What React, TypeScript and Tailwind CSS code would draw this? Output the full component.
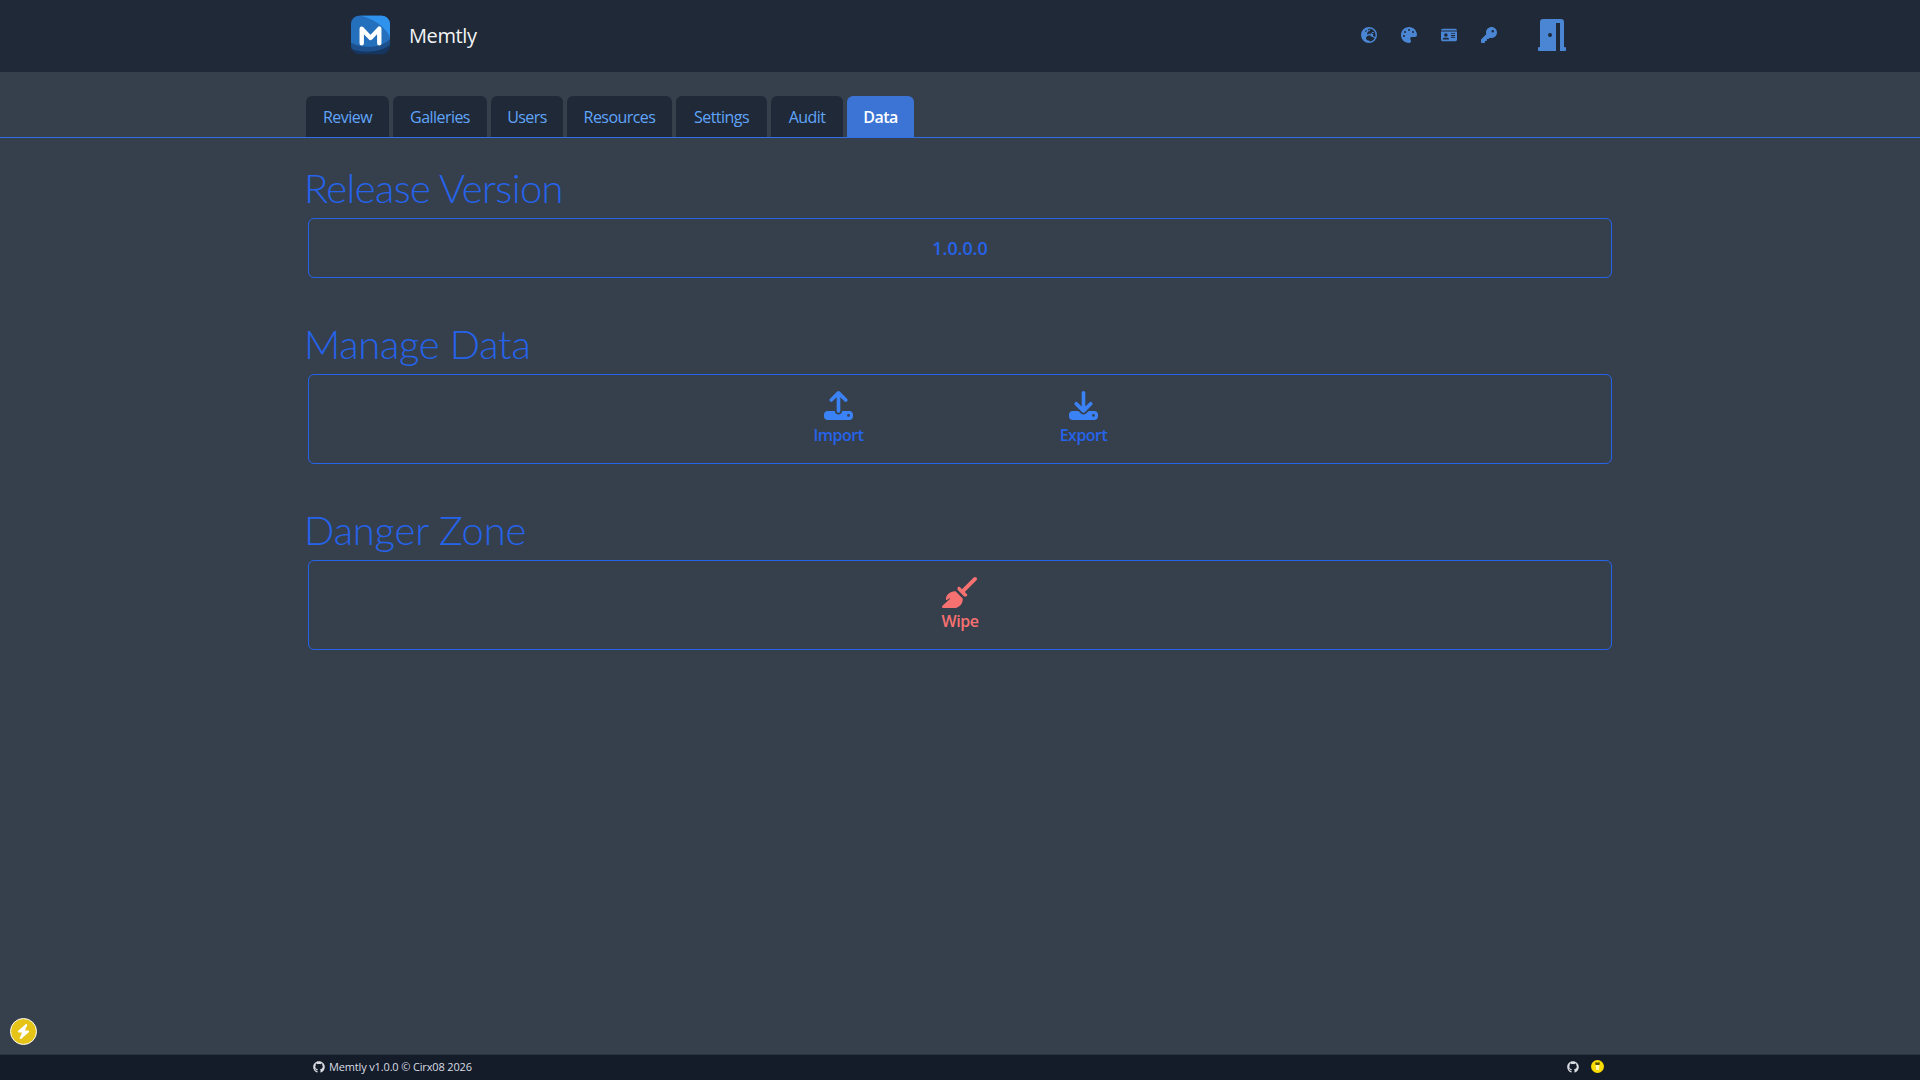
import { FaDownload, FaGithub, FaUpload, FaBroom, FaIdCard, FaKey, FaPalette, FaEarthEurope, FaBolt } from "react-icons/fa6";

const tabs = [
  { label: "Review", w: "w-[83px]" },
  { label: "Galleries", w: "w-[94px]" },
  { label: "Users", w: "w-[72px]" },
  { label: "Resources", w: "w-[105px]" },
  { label: "Settings", w: "w-[91px]" },
  { label: "Audit", w: "w-[72px]" },
];

const Logo = () => (
  <svg viewBox="0 0 40 40" className="w-[39px] h-10 shrink-0">
    <defs>
      <clipPath id="logoClip">
        <rect x="0" y="0" width="40" height="40" rx="9" />
      </clipPath>
    </defs>
    <g clipPath="url(#logoClip)">
      <rect width="40" height="40" fill="#16365f" />
      <path d="M0 34C12 39 30 38 40 30V0H0z" fill="#1e4f8d" />
      <path d="M0 28C12 34 30 34 40 24V0H0z" fill="#2470bd" />
      <path d="M9 0C22 3 34 10 40 22V0z" fill="#2f93ee" />
    </g>
    <path
      d="M11 28.500V13.500L20 23L29 13.500V28.500"
      fill="none"
      stroke="#ffffff"
      strokeWidth="4.500"
      strokeLinecap="round"
      strokeLinejoin="round"
    />
  </svg>
);

const Door = () => (
  <svg viewBox="0 0 28 32" className="w-7 h-8">
    <path
      fillRule="evenodd"
      d="M5 0h18a3 3 0 0 1 3 3v25h0.5a2 2 0 0 1 0 4H22V4h-4v28H1.500a2 2 0 0 1 0-4H2V3a3 3 0 0 1 3-3zM12 14a2 2 0 1 0 0 4a2 2 0 0 0 0-4z"
      fill="#4a86d4"
    />
  </svg>
);

const Coffee = () => (
  <svg viewBox="0 0 13 13" className="w-[13px] h-[13px]">
    <circle cx="6.500" cy="6.500" r="6.500" fill="#fbdc00" />
    <path d="M4 2.500h5l-0.600 2.500H4.600z" fill="#5b5200" />
    <path d="M4.600 5h3.800l-0.500 5h-2.800z" fill="#fff6b0" />
  </svg>
);

const Section = ({ title, spacing, children, className }: { title: string; spacing: string; children: React.ReactNode; className: string }) => (
  <div>
    <h2 className={`text-[40px] leading-[48px] font-light font-['Lato',sans-serif] text-[#2563eb] ml-[4px] mb-[6px] ${spacing}`}>{title}</h2>
    <div className={`ml-[8px] w-[1304px] rounded-[6px] border border-[#2563eb] ${className}`}>{children}</div>
  </div>
);

const App = () => {
  return (
    <div className="relative h-screen flex flex-col bg-[#36404c] font-['Open_Sans','Noto_Sans',sans-serif] overflow-hidden">
      <header className="h-[72px] shrink-0 bg-[#1f2937]">
        <div className="w-[1320px] mx-auto h-full flex items-center pl-[51px]">
          <div className="mb-[2px]">
            <Logo />
          </div>
          <span className="ml-[19px] text-[20px] text-[#f3f4f6] tracking-[-0.4px]">Memtly</span>
          <div className="ml-auto mr-[54px] mb-[2px] flex items-center text-[#4a86d4]">
            <div className="flex items-center gap-[24px] text-[16px] mr-[41px]">
              <FaEarthEurope />
              <FaPalette />
              <FaIdCard />
              <FaKey />
            </div>
            <Door />
          </div>
        </div>
      </header>

      <nav className="mt-[24px] h-[42px] shrink-0 border-b border-[#2f6fe8]">
        <div className="w-[1320px] mx-auto flex gap-[4px] pl-[6px]">
          {tabs.map((t) => (
            <div
              key={t.label}
              className={`${t.w} h-[41px] rounded-t-[6px] bg-[#1f2937] text-[#60a5fa] text-[16px] tracking-[-0.55px] flex items-center justify-center`}
            >
              {t.label}
            </div>
          ))}
          <div className="w-[67px] h-[41px] rounded-t-[6px] bg-[#3b74d4] text-white text-[16px] font-semibold tracking-[-0.55px] flex items-center justify-center">
            Data
          </div>
        </div>
      </nav>

      <main className="flex-1 w-[1320px] mx-auto flex flex-col pt-[26px]">
        <Section title="Release Version" spacing="tracking-[-0.65px]" className="h-[60px] flex items-center justify-center text-[#2563eb] text-[18px] font-semibold tracking-[-0.1px]">
          1.0.0.0
        </Section>
        <div className="h-[42px]" />
        <Section title="Manage Data" spacing="tracking-[-0.35px]" className="h-[90px] flex justify-center gap-[180px] pt-[16px] pl-[2px]">
          <div className="w-[65px] flex flex-col items-center text-[#2563eb]">
            <FaUpload className="text-[29px] text-[#3b82f6] mb-[3px]" />
            <span className="text-[16px] font-semibold tracking-[-0.5px] leading-[24px]">Import</span>
          </div>
          <div className="w-[65px] flex flex-col items-center text-[#2563eb]">
            <FaDownload className="text-[29px] text-[#3b82f6] mb-[3px]" />
            <span className="text-[16px] font-semibold tracking-[-0.5px] leading-[24px]">Export</span>
          </div>
        </Section>
        <div className="h-[42px]" />
        <Section title="Danger Zone" spacing="tracking-[-0.2px]" className="h-[90px] flex justify-center pt-[14px]">
          <div className="flex flex-col items-center text-[#f87171]">
            <FaBroom className="text-[35px] -mb-[1px]" />
            <span className="text-[16px] font-semibold tracking-[-0.5px] leading-[24px]">Wipe</span>
          </div>
        </Section>
      </main>

      <div className="absolute left-[10px] bottom-[35px] w-[27px] h-[27px] rounded-full bg-[#e6c317] border border-white flex items-center justify-center text-white text-[15px]">
        <FaBolt />
      </div>

      <footer className="h-[26px] shrink-0 bg-[#141b29] border-t border-[#2b3340]">
        <div className="w-[1320px] mx-auto h-full flex items-center pl-[13px] pr-[16px] text-[#d9dde3] text-[11px]">
          <FaGithub className="text-[12px] mr-[4px] mb-[2px]" />
          <span className="tracking-[-0.15px]">Memtly v1.0.0 © Cirx08 2026</span>
          <div className="ml-auto mb-[2px] flex items-center gap-[12px]">
            <FaGithub className="text-[12px]" />
            <Coffee />
          </div>
        </div>
      </footer>
    </div>
  );
};

export default App;
